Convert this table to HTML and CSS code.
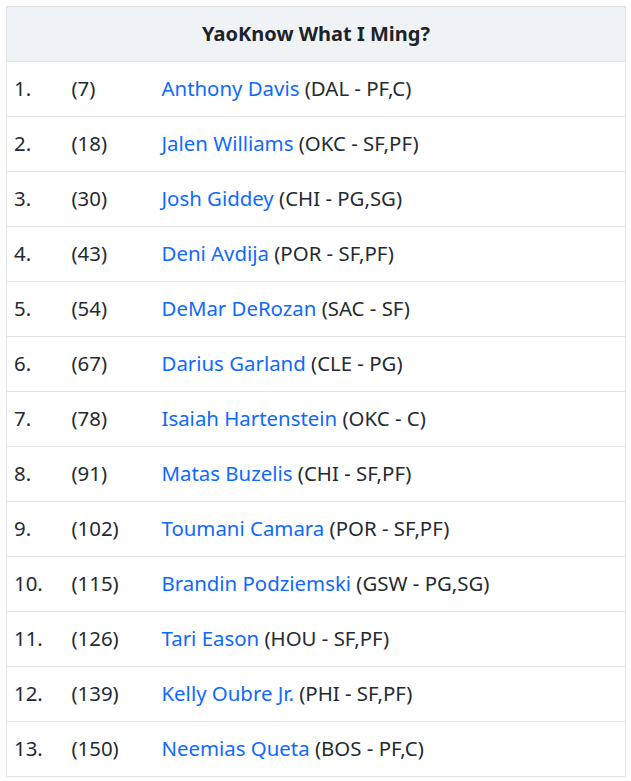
FILE: index.html
```html
<!DOCTYPE html>
<html>
<head>
<meta charset="utf-8">
<link rel="stylesheet" href="styles.css">
</head>
<body>
<table class="roster">
  <colgroup>
    <col class="col-rank">
    <col class="col-pick">
    <col class="col-player">
  </colgroup>
  <thead>
    <tr><th colspan="3">YaoKnow What I Ming?</th></tr>
  </thead>
  <tbody>
    <tr><td>1.</td><td>(7)</td><td><a href="#">Anthony Davis</a> (DAL - PF,C)</td></tr>
    <tr><td>2.</td><td>(18)</td><td><a href="#">Jalen Williams</a> (OKC - SF,PF)</td></tr>
    <tr><td>3.</td><td>(30)</td><td><a href="#">Josh Giddey</a> (CHI - PG,SG)</td></tr>
    <tr><td>4.</td><td>(43)</td><td><a href="#">Deni Avdija</a> (POR - SF,PF)</td></tr>
    <tr><td>5.</td><td>(54)</td><td><a href="#">DeMar DeRozan</a> (SAC - SF)</td></tr>
    <tr><td>6.</td><td>(67)</td><td><a href="#">Darius Garland</a> (CLE - PG)</td></tr>
    <tr><td>7.</td><td>(78)</td><td><a href="#">Isaiah Hartenstein</a> (OKC - C)</td></tr>
    <tr><td>8.</td><td>(91)</td><td><a href="#">Matas Buzelis</a> (CHI - SF,PF)</td></tr>
    <tr><td>9.</td><td>(102)</td><td><a href="#">Toumani Camara</a> (POR - SF,PF)</td></tr>
    <tr><td>10.</td><td>(115)</td><td><a href="#">Brandin Podziemski</a> (GSW - PG,SG)</td></tr>
    <tr><td>11.</td><td>(126)</td><td><a href="#">Tari Eason</a> (HOU - SF,PF)</td></tr>
    <tr><td>12.</td><td>(139)</td><td><a href="#">Kelly Oubre Jr.</a> (PHI - SF,PF)</td></tr>
    <tr><td>13.</td><td>(150)</td><td><a href="#">Neemias Queta</a> (BOS - PF,C)</td></tr>
  </tbody>
</table>
</body>
</html>
```
FILE: styles.css
```css
html, body {
  margin: 0;
  padding: 0;
  background: #ffffff;
}
body {
  padding: 6px 0 0 6px;
  font-family: "Noto Sans", "Open Sans", sans-serif;
  color: #232a31;
}
.roster {
  border-collapse: collapse;
  width: 620px;
  table-layout: fixed;
  font-size: 20.4px;
  border: 1px solid #e0e4e9;
}
.col-rank { width: 58px; }
.col-pick { width: 90px; }
.roster th {
  background: #f0f3f5;
  border-bottom: 1px solid #e0e4e9;
  height: 52px;
  padding: 0 8px 2px;
  font-weight: 700;
  font-size: 20px;
  text-align: center;
  color: #1d2228;
}
.roster td {
  border-bottom: 1px solid #e0e4e9;
  height: 52px;
  padding: 0 7px 2px;
  white-space: nowrap;
}
.roster td a {
  color: #0f69ff;
  text-decoration: none;
}
```
